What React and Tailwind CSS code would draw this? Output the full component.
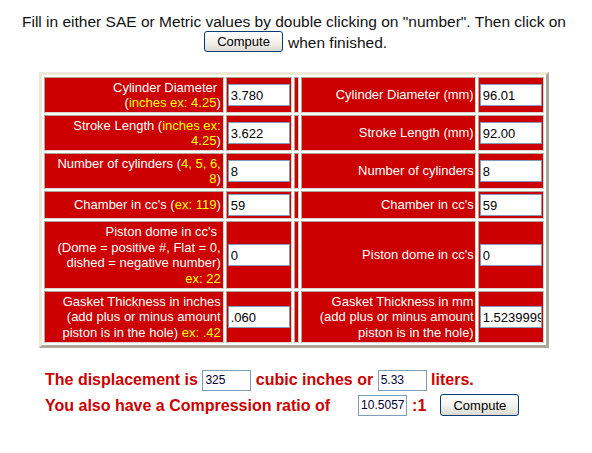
import React from "react";

const Y = ({ children }) => <span className="text-[#ffff00]">{children}</span>;

const rows = [
  {
    h: "h-[36px]",
    left: (
      <>
        Cylinder Diameter{"\u00a0"}
        <br />(<Y>inches ex: 4.25</Y>)
      </>
    ),
    lv: "3.780",
    right: "Cylinder Diameter (mm)",
    rv: "96.01",
  },
  {
    h: "h-[36px]",
    left: (
      <>
        Stroke Length (<Y>inches ex:</Y>
        <br />
        <Y>4.25</Y>)
      </>
    ),
    lv: "3.622",
    right: "Stroke Length (mm)",
    rv: "92.00",
  },
  {
    h: "h-[36px]",
    left: (
      <>
        Number of cylinders (<Y>4, 5, 6,</Y>
        <br />
        <Y>8</Y>)
      </>
    ),
    lv: "8",
    right: "Number of cylinders",
    rv: "8",
  },
  {
    h: "h-[28px]",
    left: (
      <>
        Chamber in cc's (<Y>ex: 119</Y>)
      </>
    ),
    lv: "59",
    right: "Chamber in cc's",
    rv: "59",
  },
  {
    h: "h-[68px]",
    left: (
      <>
        Piston dome in cc's{"\u00a0"}
        <br />
        (Dome = positive #, Flat = 0,
        <br />
        dished = negative number)
        <br />
        <Y>ex: 22</Y>
      </>
    ),
    lv: "0",
    right: "Piston dome in cc's",
    rv: "0",
  },
  {
    h: "h-[52px]",
    left: (
      <>
        Gasket Thickness in inches
        <br />
        (add plus or minus amount
        <br />
        piston is in the hole) <Y>ex: .42</Y>
      </>
    ),
    lv: ".060",
    right: (
      <>
        Gasket Thickness in mm
        <br />
        (add plus or minus amount
        <br />
        piston is in the hole)
      </>
    ),
    rv: "1.5239999",
  },
];

const cell =
  "bg-[#cc0000] border border-t-[#aca899] border-l-[#aca899] border-r-[#d8d6cc] border-b-[#d8d6cc] align-middle";

function Btn({ className = "" }) {
  return (
    <button
      className={
        "w-[79px] h-[21px] rounded-[3px] border border-[#003c74] bg-gradient-to-b from-[#ffffff] via-[#f4f3ee] to-[#dcdad0] text-[13px] leading-[15px] text-black font-['Liberation_Sans',Arial,sans-serif] " +
        className
      }
    >
      Compute
    </button>
  );
}

function TInput({ v }) {
  return (
    <input
      defaultValue={v}
      className="block w-[62px] h-[22px] border border-[#7f9db9] bg-white pl-[2px] text-[13px] text-black outline-none font-['Liberation_Sans',Arial,sans-serif]"
    />
  );
}

function BInput({ v }) {
  return (
    <input
      defaultValue={v}
      className="inline-block align-middle w-[49px] h-[21px] border border-[#7f9db9] bg-white pl-[2px] text-[12px] font-normal text-[#000033] outline-none font-['Liberation_Sans',Arial,sans-serif]"
    />
  );
}

export default function App() {
  return (
    <div className="w-[588px] bg-white font-['Liberation_Sans',Arial,sans-serif] text-black">
      <div className="pt-[13px] text-center text-[15.5px] leading-[18px] text-[#111111]">
        Fill in either SAE or Metric values by double clicking on "number". Then click on
      </div>
      <div className="flex items-center pl-[204px] mt-[0px] h-[21px] text-[15.5px] leading-[18px] text-[#111111]">
        <Btn />
        <span className="ml-[5px] mt-[3px]">when finished.</span>
      </div>

      <table className="mt-[20px] ml-[39px] w-[510px] table-fixed border-separate border-spacing-[2px] border-[3px] border-t-[#ece9d8] border-l-[#ece9d8] border-r-[#aca899] border-b-[#aca899] text-[13px] leading-[15.5px] text-white">
        <tbody>
          {rows.map((r, i) => (
            <tr key={i} className={r.h}>
              <td className={cell + " w-[179px] pr-[2px] pl-[2px] py-0 text-right " + r.h}>{r.left}</td>
              <td className={cell + " w-[66px] px-[1px] py-0"}>
                <TInput v={r.lv} />
              </td>
              <td className={cell + " w-[5px] p-0"}></td>
              <td className={cell + " w-[174px] pr-[1px] pl-[2px] py-0 text-right"}>{r.right}</td>
              <td className={cell + " w-[66px] px-[1px] py-0"}>
                <TInput v={r.rv} />
              </td>
            </tr>
          ))}
        </tbody>
      </table>

      <div className="mt-[21px] pl-[45px] text-[16px] font-bold text-[#cc0000] leading-[21px]">
        <div className="h-[21px] whitespace-nowrap">
          The displacement is <BInput v="325" /> cubic inches or <BInput v="5.33" /> liters.
        </div>
        <div className="flex items-center mt-[4px] h-[22px] whitespace-nowrap">
          <span>You also have a Compression ratio of</span>
          <span className="ml-[28px] flex">
            <BInput v="10.5057" />
          </span>
          <span className="ml-[5px]">:1</span>
          <Btn className="ml-[14px] h-[22px] font-normal" />
        </div>
      </div>
    </div>
  );
}
